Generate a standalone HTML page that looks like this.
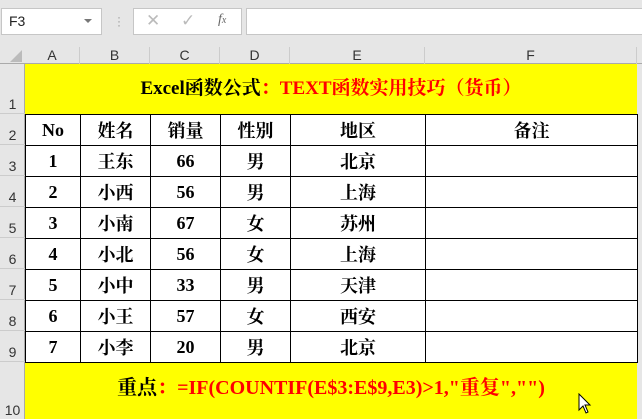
<!DOCTYPE html>
<html><head><meta charset="utf-8"><style>
*{margin:0;padding:0;box-sizing:border-box}
body{width:642px;height:419px;background:#e6e6e6;position:relative;overflow:hidden;font-family:"Liberation Sans",sans-serif}
.abs{position:absolute}
.box{background:#fff;border:1px solid #c6c6c6}
.ch{position:absolute;top:47px;height:17px;font-size:14px;color:#333;text-align:center;line-height:17px;border-right:1px solid #ccc}
.rh{position:absolute;left:0;width:25px;font-size:14px;color:#333;text-align:center;border-bottom:1px solid #ccc;display:flex;align-items:flex-end;justify-content:center;padding-bottom:1px}
table{position:absolute;left:25px;top:114px;border-collapse:collapse;background:#fff}
td{border:1.5px solid #000;height:31px;text-align:center;font-family:"Liberation Serif","Noto Serif CJK SC",serif;font-weight:bold;font-size:18px;color:#000;padding:0}
.y{background:#ff0;font-family:"Liberation Serif","Noto Serif CJK SC",serif;font-weight:bold;text-align:center}
.r{color:#f00}
</style></head><body>
<div class="abs" style="left:0;top:0;width:642px;height:44px;background:#e6e6e6"></div>
<div class="abs box" style="left:1px;top:8px;width:101px;height:27px;font-size:14px;padding:4px 7px;color:#222">F3<span style="position:absolute;right:9px;top:10px;border-left:4px solid transparent;border-right:4px solid transparent;border-top:4px solid #777"></span></div>
<div class="abs" style="left:117px;top:15px;color:#999;font-size:12px;line-height:4px">·<br>·<br>·</div>
<div class="abs box" style="left:133px;top:8px;width:109px;height:27px;color:#bbb;font-size:17px">
<span class="abs" style="left:12px;top:2px">✕</span><span class="abs" style="left:47px;top:2px">✓</span>
<span class="abs" style="left:84px;top:3px;color:#666;font-family:'Liberation Serif',serif;font-style:italic;font-size:14px">f<small style="font-size:10px">x</small></span></div>
<div class="abs box" style="left:246px;top:8px;width:400px;height:27px"></div>
<div class="abs" style="left:0;top:44px;width:642px;height:20px;background:#e6e6e6;border-bottom:1px solid #aaa"></div>
<div class="abs" style="left:10px;top:50px;width:0;height:0;border-left:12px solid transparent;border-bottom:12px solid #bbb"></div>
<div class="ch" style="left:25px;width:55px">A</div>
<div class="ch" style="left:80px;width:70px">B</div>
<div class="ch" style="left:150px;width:70px">C</div>
<div class="ch" style="left:220px;width:70px">D</div>
<div class="ch" style="left:290px;width:135px">E</div>
<div class="ch" style="left:425px;width:212px">F</div>
<div class="abs" style="left:0;top:64px;width:25px;height:355px;background:#e6e6e6;border-right:1px solid #aaa"></div>
<div class="rh" style="top:64px;height:50px">1</div>
<div class="rh" style="top:114px;height:31px">2</div>
<div class="rh" style="top:145px;height:31px">3</div>
<div class="rh" style="top:176px;height:31px">4</div>
<div class="rh" style="top:207px;height:31px">5</div>
<div class="rh" style="top:238px;height:31px">6</div>
<div class="rh" style="top:269px;height:31px">7</div>
<div class="rh" style="top:300px;height:31px">8</div>
<div class="rh" style="top:331px;height:31px">9</div>
<div class="rh" style="top:362px;height:57px;border:none">10</div>
<div class="abs y" style="left:25px;top:64px;width:612px;height:50px;line-height:50px;font-size:19px">Excel函数公式<span class="r">：TEXT函数实用技巧（货币）</span></div>
<table>
<colgroup><col style="width:55px"><col style="width:70px"><col style="width:70px"><col style="width:70px"><col style="width:135px"><col style="width:212px"></colgroup>
<tr><td>No</td><td>姓名</td><td>销量</td><td>性别</td><td>地区</td><td>备注</td></tr>
<tr><td>1</td><td>王东</td><td>66</td><td>男</td><td>北京</td><td></td></tr>
<tr><td>2</td><td>小西</td><td>56</td><td>男</td><td>上海</td><td></td></tr>
<tr><td>3</td><td>小南</td><td>67</td><td>女</td><td>苏州</td><td></td></tr>
<tr><td>4</td><td>小北</td><td>56</td><td>女</td><td>上海</td><td></td></tr>
<tr><td>5</td><td>小中</td><td>33</td><td>男</td><td>天津</td><td></td></tr>
<tr><td>6</td><td>小王</td><td>57</td><td>女</td><td>西安</td><td></td></tr>
<tr><td>7</td><td>小李</td><td>20</td><td>男</td><td>北京</td><td></td></tr>
</table>
<div class="abs y" style="left:25px;top:363px;width:612px;height:56px;line-height:50px;font-size:20px">重点<span class="r">：=IF(COUNTIF(E$3:E$9,E3)&gt;1,"重复","")</span></div>
<svg class="abs" style="left:578px;top:393px" width="14" height="22" viewBox="0 0 14 22"><path d="M1 1 L1 17 L5 13 L8 20 L10 19 L7 12 L12 12 Z" fill="#fff" stroke="#000" stroke-width="1"/></svg>
</body></html>
